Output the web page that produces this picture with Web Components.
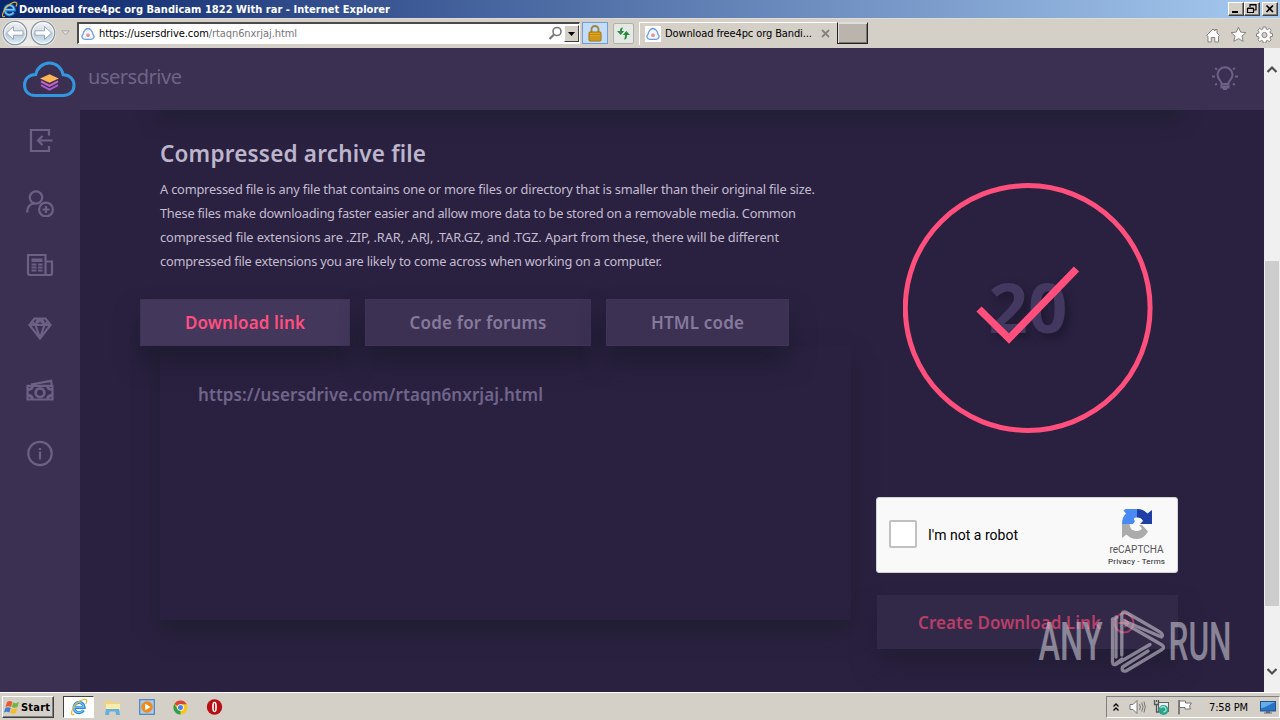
<!DOCTYPE html>
<html lang="en">
<head>
<meta charset="utf-8">
<title>usersdrive</title>
<style>
html,body{margin:0;height:100%;overflow:hidden;background:#2a2140}
body{font-family:"Noto Sans","Open Sans",sans-serif}
</style>
</head>
<body>
<desktop-screen></desktop-screen>
<script>
const define=(name,html,init)=>customElements.define(name,class extends HTMLElement{
  constructor(){
    super();
    const t=document.createElement('template');
    t.innerHTML=html;
    this.attachShadow({mode:'open'}).append(t.content.cloneNode(true));
  }
  connectedCallback(){ if(init) init(this,this.shadowRoot); }
});

/* A single line of text whose tracking is adjusted to a given width. */
define('fit-label',`<style>:host{display:block;white-space:pre;flex:none}span{display:inline-block}</style><span><slot></slot></span>`,(el,root)=>{
  const w=parseFloat(el.getAttribute('w'));
  const s=root.querySelector('span');
  const n=el.textContent.length;
  s.style.letterSpacing='0px';
  s.style.letterSpacing=((w-s.getBoundingClientRect().width)/(n-1))+'px';
  el.style.width=w+'px';
});

const cloudFav=`<svg width="14" height="14" viewBox="0 0 14 14"><path d="M4 12.300C.6 12.300.4 8.800 1.900 7.600 2.400 4.500 4.600 1.500 7 1.500S11.600 4.500 12.100 7.600C13.600 8.800 13.400 12.300 10 12.300z" fill="#f2f8ff" stroke="#6b9be0" stroke-width="1.300"/><circle cx="7" cy="8.200" r="1.900" fill="#e8939d"/></svg>`;
const ieLogo=s=>`<svg width="${s}" height="${s}" viewBox="0 0 20 20"><path d="M15 13.600A5.700 5.700 0 1 1 15.800 10.600H5" fill="none" stroke="#2b86d4" stroke-width="3.400"/><path d="M14.600 13.400A5.600 5.600 0 1 1 15.400 10.200H5" fill="none" stroke="#7cc8f4" stroke-width="1.300"/><path d="M4.500 18C1 20 .8 16 4 10.500 8 4 15 .3 17.800 1.700c1.500.8.9 2.800-.3 4.800" fill="none" stroke="#e9b52c" stroke-width="1.300"/></svg>`;

define('win-titlebar',`<style>
:host{display:flex;align-items:center;height:18px;background:linear-gradient(90deg,#0b256b,#a6caf0);font:bold 11px "DejaVu Sans Condensed","DejaVu Sans",sans-serif;font-stretch:condensed;color:#fff;padding:0 2px 0 1px;box-sizing:border-box}
fit-label{margin-left:1px;flex:1}
svg{flex:none}
.b{width:16px;height:14px;box-sizing:border-box;background:#d4d0c8;border:1px solid;border-color:#fff #404040 #404040 #fff;box-shadow:inset -1px -1px #808080;display:block}
.b+.b.x{margin-left:2px}
.g{flex:1}
</style>${ieLogo(17)}<fit-label w="371" style="flex:none">Download free4pc org Bandicam 1822 With rar - Internet Explorer</fit-label><span class="g"></span>
<svg class="b" viewBox="0 0 14 12"><path d="M3 9h6" stroke="#000" stroke-width="2"/></svg>
<svg class="b" viewBox="0 0 14 12"><path d="M5 4V1.500h6V7H9M5 2h6M2.500 5.500h6v4h-6zM2.500 5h6" fill="none" stroke="#000" stroke-width="1.200"/></svg>
<svg class="b x" viewBox="0 0 14 12"><path d="M3.500 2.500l6.500 6.500M10 2.500L3.500 9" stroke="#000" stroke-width="1.700"/></svg>`);

const arrowBtn=d=>`<svg width="26" height="26" viewBox="0 0 26 26"><circle cx="13" cy="13" r="11.700" fill="url(#g)" stroke="#8a96a2" stroke-width="1.300"/><circle cx="13" cy="13" r="10.500" fill="none" stroke="#fff" stroke-opacity=".8"/><path d="${d}" fill="#fff" stroke="#92a3b3" stroke-width=".9"/><defs><linearGradient id="g" x2="0" y2="1"><stop stop-color="#f2f4f6"/><stop offset=".48" stop-color="#d3dbe3"/><stop offset=".55" stop-color="#b9cbd9"/><stop offset="1" stop-color="#d9f1fb"/></linearGradient></defs></svg>`;
define('ie-toolbar',`<style>
:host{display:flex;align-items:center;height:30px;background:#d4d0c8;box-sizing:border-box;border-top:1px solid #dedbd4;padding:0 7px 1px 2px;font:11px "DejaVu Sans Condensed","DejaVu Sans",sans-serif;font-stretch:condensed;color:#000}
svg{display:block;flex:none}
.nav{display:flex;gap:2px;background:#eceae6;border-radius:13px 13px 12px 12px;height:26px}
.caret{margin:0 7px 0 5px}
.addr{width:503px;height:22px;box-sizing:border-box;border:1px solid #fff;border-top:2px solid #4b4a49;border-left:2px solid #4b4a49;background:#fff;display:flex;align-items:center;padding-left:2px}
.addr fit-label{margin-left:4px}.addr i{font-style:normal;color:#777}
.g{flex:1}
.dd{width:15px;height:17px;background:#d4d0c8;border:1px solid;border-color:#fff #404040 #404040 #fff;box-sizing:border-box;margin-left:1px}
.lock{width:26px;height:22px;background:#c4dcf8;border:1px solid #6f9fd8;box-sizing:border-box;margin-left:2px;display:grid;place-items:center}
.ref{width:21px;height:21px;background:#e6e8e5;border:1px solid #aab4aa;box-sizing:border-box;margin-left:5px;display:grid;place-items:center;border-radius:2px}
.tab{width:198px;height:23px;box-sizing:border-box;border-top:1px solid #fff;border-left:1px solid #fff;margin-left:5px;display:flex;align-items:center;padding-left:5px}
.tab>span{background:#fff;padding:1px}
.tab fit-label{margin:0 9px 0 4px}
.new{width:31px;height:22px;box-sizing:border-box;background:#bbb4ac;border:1px solid #222;border-top-color:#ddd;box-shadow:inset 1px 1px #ddd,inset -1px -1px #777}
.t{margin-top:3px}
.t+.t{margin-left:9px}
</style>
<div class="nav">${arrowBtn('M4.500 13l7-6.500v4.300h9.500v4.400h-9.500v4.300z')}${arrowBtn('M21.500 13l-7-6.500v4.300H5v4.400h9.500v4.300z')}</div>
<svg class="caret" width="9" height="6" viewBox="0 0 9 6"><path d="M.8.800h7.400L4.500 5z" fill="#e0ddd8" stroke="#aaa"/></svg>
<div class="addr">${cloudFav}<fit-label w="198">https://usersdrive.com<i>/rtaqn6nxrjaj.html</i></fit-label><span class="g"></span>
<svg width="15" height="15" viewBox="0 0 15 15"><circle cx="9" cy="5.500" r="4" fill="none" stroke="#777" stroke-width="1.600"/><path d="M6 8.500L1.500 13" stroke="#777" stroke-width="2.200"/></svg>
<svg class="dd" viewBox="0 0 13 15"><path d="M3 6h7L6.500 10z" fill="#000"/></svg></div>
<div class="lock"><svg width="14" height="17" viewBox="0 0 14 17"><path d="M3.500 8V4.500a3.500 3.500 0 0 1 7 0V8" fill="none" stroke="#9b8740" stroke-width="1.900"/><rect x="1" y="7" width="12" height="9" rx="1" fill="#e3a81c" stroke="#9a6c10"/><path d="M2 9.500h10M2 12h10M2 14h10" stroke="#b87d10" stroke-width=".8"/></svg></div>
<div class="ref"><svg width="17" height="15" viewBox="0 0 17 15"><path d="M8 1.500C5.500 1.500 5 3 5 5H2l3.700 4L9.200 5H7c0-1.500.3-2 1-3.500z" fill="#2b8b3f"/><path d="M9 13.500c2.500 0 3-1.500 3-4.500h3l-3.700-4L7.800 9H10c0 2-.3 3-1 4.500z" fill="#2b8b3f"/></svg></div>
<div class="tab"><span>${cloudFav}</span><fit-label w="147">Download free4pc org Bandi...</fit-label><svg width="9" height="9" viewBox="0 0 9 9"><path d="M1 1l7 7M8 1L1 8" stroke="#858280" stroke-width="1.800"/></svg></div>
<div class="new"></div><span class="g"></span>
<svg class="t" width="16" height="16" viewBox="0 0 16 16"><path d="M1.500 8.500L8 2l2 2V2.500h2V6l2.500 2.500-1 .8V15H9.800v-4.500H6.200V15H3V9.300z" fill="#fff" stroke="#858280"/></svg>
<svg class="t" width="17" height="17" viewBox="0 0 17 17"><path d="M8.500 1.200l2.200 4.900 5.200.5-3.900 3.500 1.200 5.300-4.700-2.800-4.700 2.800L5 10.100 1.100 6.600l5.200-.5z" fill="#fff" stroke="#858280"/></svg>
<svg class="t" width="17" height="17" viewBox="0 0 17 17"><path d="M7.200 1h2.600l.4 2.100 1.300.5L13.300 2.400l1.800 1.800-1.200 1.800.5 1.300 2.100.4v2.600l-2.100.4-.5 1.300 1.200 1.800-1.800 1.800-1.800-1.200-1.300.5-.4 2.100H7.200l-.4-2.100-1.300-.5-1.800 1.200-1.800-1.800 1.200-1.800-.5-1.300L.5 10.300V7.700l2.100-.4.500-1.300-1.200-1.800L3.700 2.400l1.800 1.200 1.300-.5z" fill="#fff" stroke="#858280"/><circle cx="8.500" cy="9" r="2.600" fill="#d4d0c8" stroke="#858280"/></svg>`);

define('site-header',`<style>
:host{display:flex;align-items:center;height:62px;background:#3b3052;padding:0 26px 0 22px;box-sizing:border-box}
svg{flex:none}
.logo{margin-top:2px}
.bulb{margin-top:-2px}
fit-label{font:20px/26px "Noto Sans",sans-serif;color:#6f6487;margin:-4px 0 0 12px}
.g{flex:1}
</style>
<svg class="logo" width="54" height="40" viewBox="0 0 54 40"><path d="M13 35.500h28c7 0 11-4.500 11-10.300 0-6-4.500-10.400-10.800-10.400C39.500 7.500 34 3 27.500 3S15 7.800 13.700 14.500C7 14.500 2.500 19 2.500 25c0 6 4 10.500 10.500 10.500z" fill="none" stroke="#3097e0" stroke-width="3"/><path d="M19 25.200l8.500 4.500 8.500-4.500" fill="none" stroke="#a95bcb" stroke-width="2"/><path d="M19 21.300l8.500 4.500 8.500-4.500" fill="none" stroke="#cd63c4" stroke-width="2"/><path d="M18 18.500l9.500-4.300 9.300 4.300-9.300 4.200z" fill="#f9b455"/></svg>
<fit-label w="94">usersdrive</fit-label><span class="g"></span>
<svg class="bulb" width="26" height="26" viewBox="0 0 26 26" fill="none" stroke="#6d6286" stroke-width="2"><path d="M9.700 19c0-3-4.200-4.500-4.200-9.200a7.500 7.500 0 0 1 15 0c0 4.700-4.200 6.200-4.200 9.200zM9.500 19.500v3h7v-3M11 24h4M9.500 21.500h7M0 11.500h3M23 11.500h3M3.200 3l1.800 1.600M22.800 3L21 4.600M3.200 20L5 18.400M22.800 20L21 18.400"/></svg>`);

define('site-sidebar',`<style>
:host{display:flex;flex-direction:column;align-items:center;width:80px;flex:none;background:#3b3052;padding-top:16px;box-sizing:border-box;gap:34.600px}
svg{display:block;width:28px;height:28px;flex:none;fill:none;stroke:#6c6185;stroke-width:2.200}
</style>
<svg viewBox="0 0 28 28"><path d="M23 9.500V4H5v21h18v-5M26.500 14.500H12M16.500 10l-4.500 4.500 4.500 4.500"/></svg>
<svg viewBox="0 0 28 28"><circle cx="10" cy="8.500" r="6.200"/><path d="M1.200 23.500C1 18 4 14.600 8.500 14.500"/><circle cx="20" cy="20.500" r="6.900"/><path d="M20 17v7M16.500 20.500h7"/></svg>
<svg viewBox="0 0 28 28"><path d="M2 4h17.500v20H4a2 2 0 0 1-2-2zM19.500 10.500H26V22a2 2 0 0 1-2 2h-6"/><path d="M5.500 9.200h11" stroke-width="3.500"/><path d="M5.500 13.500h5M12 13.500h4.500M5.500 16.500h5M12 16.500h4.500M5.500 19.500h5M12 19.500h4.500" stroke-width="2"/></svg>
<svg viewBox="0 0 28 28"><path d="M8.500 4.500h11l5 6.500L14 24.500 3.500 11z"/><path d="M3.500 11h21M14 24L9.500 11 12 4.500M14 24l4.500-13L16 4.500M6 7.500L9.500 11 14 6l4.500 5L22 7.500"/></svg>
<svg viewBox="0 0 28 28"><path d="M1.500 9.800h25v13.700h-25zM5 8.500l20-3.700.7 4"/><circle cx="14" cy="16.700" r="4.400" stroke-width="2.700"/><path d="M2 13.500c3 0 4.500-1.500 4.500-4M26 13.500c-3 0-4.500-1.500-4.500-4M2 19.500c3 0 4.500 1.500 4.500 4M26 19.500c-3 0-4.500 1.500-4.500 4" stroke-width="2.800"/></svg>
<svg viewBox="0 0 28 28"><circle cx="14" cy="14.500" r="11.700"/><path d="M14 12.500v8M14 9v2"/></svg>`);

define('code-tab',`<style>
:host{display:grid;place-items:center;height:47px;background:#3c3153;color:#85799c;font:600 17px/24px "Noto Sans",sans-serif;box-shadow:0 16px 24px rgba(27,26,44,.75);box-sizing:border-box;border:1px solid #3f3458}
:host([active]){background:#43375b;color:#ff4f81}
</style><slot></slot>`);

define('archive-info',`<style>
:host{display:block;width:711px;flex:none}
section{margin-left:20px}
h1{margin:29px 0 9px;font:600 22.500px/29px "Noto Sans",sans-serif;color:#bdb5cb}
.p{font:12.800px/24px "Noto Sans",sans-serif;color:#c4bcd0}
.tabs{display:flex;gap:15px;margin-top:26px;position:relative}
.panel{margin-left:20px;width:691px;height:274px;box-sizing:border-box;padding:35px 38px;box-shadow:0 12px 20px rgba(31,30,48,.9);color:#70658a;font:600 17px/28px "Noto Sans",sans-serif}
</style>
<section><h1><fit-label w="266">Compressed archive file</fit-label></h1>
<div class="p"><fit-label w="655">A compressed file is any file that contains one or more files or directory that is smaller than their original file size.</fit-label>
<fit-label w="636">These files make downloading faster easier and allow more data to be stored on a removable media. Common</fit-label>
<fit-label w="619">compressed file extensions are .ZIP, .RAR, .ARJ, .TAR.GZ, and .TGZ. Apart from these, there will be different</fit-label>
<fit-label w="502">compressed file extensions you are likely to come across when working on a computer.</fit-label></div></section>
<div class="tabs"><code-tab active style="width:210px"><fit-label w="120">Download link</fit-label></code-tab><code-tab style="width:226px"><fit-label w="137">Code for forums</fit-label></code-tab><code-tab style="width:183px"><fit-label w="93">HTML code</fit-label></code-tab></div>
<div class="panel"><fit-label w="345">https://usersdrive.com/rtaqn6nxrjaj.html</fit-label></div>`);

define('count-ring',`<style>
:host{display:grid;width:250px;height:250px;margin-left:27px}
svg,span{grid-area:1/1}
span{place-self:center;margin-top:-4px;font:bold 69px/80px "Noto Sans",sans-serif;color:#43385f;text-shadow:4px 5px 8px #1d1930}
svg{position:relative}
</style><span><fit-label w="79">20</fit-label></span><svg viewBox="0 0 250 250" width="250" height="250" fill="none" stroke="#ff4f7c"><circle cx="124.700" cy="125" r="122.400" stroke-width="5"/><path d="M76 126L106 155.500 173.500 86" stroke-width="7.300"/></svg>`);

define('captcha-box',`<style>
:host{display:flex;align-items:center;width:302px;height:76px;background:#f9f9f9;border:1px solid #d3d3d3;border-radius:3px;box-sizing:border-box;margin-top:64px;padding:0 12px 0 12px;font-family:Roboto,sans-serif;color:#000}
.c{width:28px;height:28px;box-sizing:border-box;border:2px solid #c1c1c1;border-radius:2px;background:#fff;margin-top:-2px}
.l{font-size:14px;margin-left:11px}
.g{flex:1}
.r{display:flex;flex-direction:column;align-items:center;color:#555}
.r svg{margin:4px 0 4px}
</style><div class="c"></div><fit-label class="l" w="90">I'm not a robot</fit-label><span class="g"></span>
<div class="r"><svg width="32" height="32" viewBox="0 0 32 32"><path d="M16 1v8.500c-3 0-4 1.500-2 3.500l-2 3H1C1 11 2.500 8 5 5.500L2.500 2.500 4.500 1z" fill="#4a8af4"/><path d="M16 1c5 0 8 2 10.500 4.500L31 2v14H19l3-3c-1-2.500-3-3.500-6-3.500z" fill="#1f3fa6"/><path d="M1 16h7.500c.5 5 3 7 7.500 7 2.500 0 4-1 5-2.500L18 17h3l6 6.500C24.500 28 21 31 16 31c-5 0-8-2-10.500-4.500L1 30z" fill="#ababab"/></svg>
<fit-label w="54" style="font-size:10px;line-height:12px">reCAPTCHA</fit-label><fit-label w="57" style="font-size:8px;line-height:11px;color:#222">Privacy - Terms</fit-label></div>`);

define('create-button',`<style>
:host{display:flex;align-items:center;width:301px;height:54px;box-sizing:border-box;margin:22px 0 0 1px;padding:2px 0 0 41px;background:#322948;color:#b83e68;box-shadow:0 16px 24px rgba(27,26,44,.5);font:600 17px/24px "Noto Sans",sans-serif}
svg{margin-left:12px}
</style><fit-label w="183">Create Download Link</fit-label><svg width="22" height="22" viewBox="0 0 22 22" fill="none" stroke="#a13b63" stroke-width="2"><circle cx="11" cy="11" r="9.500"/><path d="M5.500 11h10M11.500 7l4 4-4 4"/></svg>`);

define('page-scrollbar',`<style>
:host{display:flex;flex-direction:column;align-items:center;width:16px;flex:none;background:#f0f0f0;box-sizing:border-box;padding:17px 0 16px}
svg{display:block}
.th{width:14px;height:345px;background:#cdcdcd;margin:187px 0 auto}
</style><svg width="12" height="9" viewBox="0 0 12 9"><path d="M1.500 7L6 2.500 10.500 7" fill="none" stroke="#505050" stroke-width="2.200"/></svg><div class="th"></div><svg width="12" height="9" viewBox="0 0 12 9"><path d="M1.500 2L6 6.500 10.500 2" fill="none" stroke="#505050" stroke-width="2.200"/></svg>`);

define('run-watermark',`<style>:host{position:absolute;left:1034px;top:606px;width:212px;height:76px;pointer-events:none;opacity:.55}svg{display:block}</style>
<svg width="212" height="76" viewBox="0 0 212 76"><g font-family="Roboto,sans-serif" font-size="53" font-weight="500" fill="#d6d3dc"><text x="4.500" y="53.700" textLength="64" lengthAdjust="spacingAndGlyphs">ANY</text><text x="134.500" y="53.700" textLength="63" lengthAdjust="spacingAndGlyphs">RUN</text></g><g fill="none" stroke="#d6d3dc" stroke-width="3.300" stroke-linejoin="round" stroke-linecap="round"><path d="M83 11.500L78.500 13V56q.5 4 4 2L116 38.500"/><path d="M87.800 49V8.500q1-4 4.500-2L126 26q4 3 1.500 5L88 14"/><path d="M82 11V51M82.500 57L88 53M91 17.500L128 39q3 2.500 0 4.500L92 65q-5 1-3.500-4L114 45"/></g></svg>`);

define('win-taskbar',`<style>
:host{display:flex;align-items:center;height:28px;background:#d4d0c8;border-top:1px solid #fff;box-sizing:border-box;padding:1px 0 0 2px;font:11px "DejaVu Sans Condensed","DejaVu Sans",sans-serif;font-stretch:condensed;color:#000}
svg{display:block;flex:none}
.s{display:flex;align-items:center;width:52px;height:22px;box-sizing:border-box;border:1px solid;border-color:#fff #404040 #404040 #fff;box-shadow:inset -1px -1px #808080;font-weight:bold;padding-left:1px;gap:1px}
.e{display:grid;place-items:center;width:31px;height:22px;box-sizing:border-box;background:#fff;border:1px solid;border-color:#404040 #fff #fff #404040;margin:0 10px 0 9px}
.q{margin-right:18px}
.g{flex:1}
.tray{display:flex;align-items:center;width:174px;height:22px;box-sizing:border-box;border:1px solid;border-color:#808080 #fff #fff #808080;padding-left:5px}
</style>
<div class="s"><svg width="16" height="16" viewBox="0 0 16 16"><path d="M3 3q3-2 5.300 0L7 8Q4.500 6.500 1.500 8z" fill="#e8592c"/><path d="M9 3.500q3 1.500 6-.5L13.500 8q-3 1.500-5.700 0z" fill="#74b344"/><path d="M1.300 9Q4 7.500 6.700 9l-1.300 4.500Q3 12 0 13.500z" fill="#3c7fd4"/><path d="M7.600 9.200q2.700 1.400 5.700 0L12 14q-3 1.500-5.700-.2z" fill="#f4bd2a"/></svg><fit-label w="29">Start</fit-label></div>
<div class="e">${ieLogo(18)}</div>
<svg class="q" width="17" height="17" viewBox="0 0 17 17"><path d="M1 2h6l1 1.500h8V9H1z" fill="#efd27a"/><path d="M2 5h14v6H2z" fill="#f8ebae"/><path d="M1 16l1-6h13l1 6h-4l-.5-3.500h-6L5 16z" fill="#63b0dc"/></svg>
<svg class="q" width="16" height="16" viewBox="0 0 16 16"><rect x=".7" y=".7" width="14.600" height="14.600" fill="#a9cdec" stroke="#4a83c0" stroke-width="1.200"/><circle cx="8" cy="8" r="5.800" fill="#f18a1d"/><path d="M6.200 4.700L11.500 8l-5.300 3.300z" fill="#fff"/></svg>
<svg class="q" width="15" height="15" viewBox="0 0 16 16"><circle cx="8" cy="8" r="7.500" fill="#f8c81c"/><path d="M8 8L1.500 4.200A7.500 7.500 0 0 1 14.600 4.500H8z" fill="#dd4235"/><path d="M8 8v7.500A7.500 7.500 0 0 1 1.500 4.200L5 10z" fill="#2f9e50"/><circle cx="8" cy="8" r="3.500" fill="#fff"/><circle cx="8" cy="8" r="2.700" fill="#4285e8"/></svg>
<svg width="17" height="16" viewBox="0 0 17 16"><circle cx="8.500" cy="8" r="7.700" fill="#b90f14"/><ellipse cx="8.500" cy="8" rx="2.400" ry="5.200" fill="#fff"/><ellipse cx="8.500" cy="8" rx=".7" ry="4" fill="#b90f14"/></svg>
<span class="g"></span>
<div class="tray"><svg width="8" height="11" viewBox="0 0 8 11"><path d="M1.500 4.500L4 2l2.500 2.500M1.500 8.500L4 6l2.500 2.500" fill="none" stroke="#000" stroke-width="1.300"/></svg>
<svg style="margin-left:9px" width="17" height="16" viewBox="0 0 17 16"><path d="M1 5.500h3l4-4v13l-4-4H1z" fill="#fff" stroke="#777"/><path d="M10.500 5q1.800 3 0 6M12.700 3.500q2.800 4.500 0 9M15 2.500q2.500 5.500 0 11" fill="none" stroke="#777"/></svg>
<svg style="margin-left:7px" width="17" height="17" viewBox="0 0 17 17"><rect x="5.500" y="3.500" width="10" height="9" fill="#e6f0f2" stroke="#666"/><path d="M1.500 1v4.500h4V1M3.500 1v2M3.500 6v7H7" fill="none" stroke="#555" stroke-width="1.300"/><circle cx="10.500" cy="11" r="5" fill="#2ba28e"/><path d="M7.500 9q3-3 5 0t-2 4" fill="none" stroke="#a8e6c8" stroke-width="1.300"/></svg>
<svg style="margin-left:7px" width="16" height="16" viewBox="0 0 16 16"><path d="M2 1v14.500" stroke="#666" stroke-width="1.500"/><path d="M2.500 2h6v2h6l-2 3 1 3H8V8.500H2.500z" fill="#fff" stroke="#777"/></svg>
<fit-label w="39" style="margin-left:16px">7:58 PM</fit-label>
<svg style="margin-left:12px" width="16" height="14" viewBox="0 0 16 14"><rect x=".5" y="1.500" width="15" height="9.500" fill="#2875c8" stroke="#24528f"/><path d="M1 2h14L4 7.500 1 8z" fill="#65aee9"/><path d="M6 11h4v1.500h2v1H4v-1h2z" fill="#667"/></svg></div>`);

define('desktop-screen',`<style>
:host{display:flex;flex-direction:column;width:1280px;height:720px;position:relative;overflow:hidden}
.view{display:flex;height:644px;flex:none}
.site{flex:1;display:flex;flex-direction:column;min-width:0}
.body{flex:1;display:flex;min-height:0}
main{flex:1;display:flex;flex-direction:column;background:#2a2140;overflow:hidden}
.above{height:20px;width:1018px;margin:-20px 0 0 80px;flex:none;box-shadow:0 8px 18px 3px #221f35}
.cols{display:flex;padding-left:60px}
.right{padding:73px 0 0 25px}
</style>
<win-titlebar></win-titlebar><ie-toolbar></ie-toolbar>
<div class="view"><div class="site"><site-header></site-header><div class="body"><site-sidebar></site-sidebar>
<main><div class="above"></div><div class="cols"><archive-info></archive-info><div class="right"><count-ring></count-ring><captcha-box></captcha-box><create-button></create-button></div></div></main></div></div><page-scrollbar></page-scrollbar></div>
<win-taskbar></win-taskbar><run-watermark></run-watermark>`);
</script>
</body>
</html>
